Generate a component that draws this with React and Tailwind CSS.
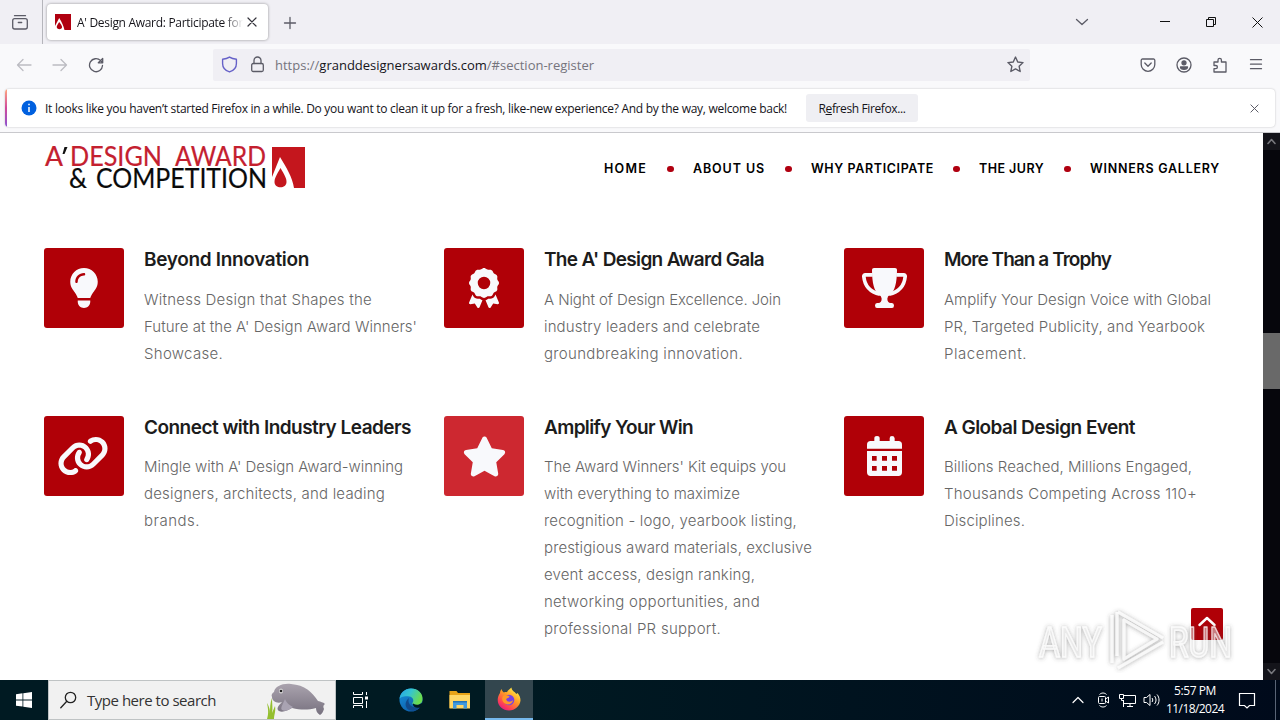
import { useLayoutEffect, useRef, useState } from "react";
import { FaLightbulb, FaAward, FaLink, FaStar } from "react-icons/fa6";

// Spreads one line of text over a fixed width by adjusting its tracking.
function Fit({ w, className = "", children }) {
  const ref = useRef(null);
  const [spacing, setSpacing] = useState(0);
  useLayoutEffect(() => {
    const natural = ref.current.getBoundingClientRect().width;
    const count = ref.current.textContent.length;
    setSpacing((s) => s + (w - natural) / count);
  }, [w]);
  return (
    <span ref={ref} className={`inline-block whitespace-nowrap ${className}`} style={{ letterSpacing: `${spacing}px` }}>
      {children}
    </span>
  );
}

function Trophy() {
  return (
    <svg width="45" height="40" viewBox="0 0 135 120" fill="#f8f9fc">
      <path d="M30 5Q30 0 36 0H99Q105 0 105 5C105 45 98 70 84 80Q76 85 76 92 76 104 86 105H90Q96 106 96 112.500 96 120 90 120H45Q39 120 39 112.500 39 106 45 105H49Q59 104 59 92 59 85 51 80C37 70 30 45 30 5Z" />
      <path d="M32 20.500H10Q5 20.500 5.500 26C8 52 24 72 54 79M103 20.500H125Q130 20.500 129.500 26C127 52 111 72 81 79" fill="none" stroke="#f8f9fc" strokeWidth="11" />
    </svg>
  );
}

function Calendar() {
  return (
    <svg width="35" height="40" viewBox="0 0 105 120" fill="#f8f9fc">
      <path d="M0 38V26Q0 15 11 15H22V7Q22 0 30 0T38 7V15H68V7Q68 0 75 0T83 7V15H94Q105 15 105 26V38Z" />
      <path fillRule="evenodd" d="M0 45H105V109Q105 120 94 120H11Q0 120 0 109ZM15 60V74H29V60ZM45 60V74H60V60ZM75 60V74H90V60ZM15 90V104H29V90ZM45 90V104H60V90ZM75 90V104H90V90Z" />
    </svg>
  );
}

const features = [
  {
    icon: <FaLightbulb size={40} />, title: "Beyond Innovation", w: 165,
    lines: [["Witness Design that Shapes the", 228], ["Future at the A' Design Award Winners'", 273], ["Showcase.", 79]],
  },
  {
    icon: <FaAward size={40} />, title: "The A' Design Award Gala", w: 220,
    lines: [["A Night of Design Excellence. Join", 237], ["industry leaders and celebrate", 216], ["groundbreaking innovation.", 199]],
  },
  {
    icon: <Trophy />, title: "More Than a Trophy", w: 167,
    lines: [["Amplify Your Design Voice with Global", 267], ["PR, Targeted Publicity, and Yearbook", 261], ["Placement.", 83]],
  },
  {
    icon: <FaLink size={52} className="-translate-x-px" />, title: "Connect with Industry Leaders", w: 267, second: true,
    lines: [["Mingle with A' Design Award-winning", 259], ["designers, architects, and leading", 241], ["brands.", 56]],
  },
  {
    icon: <FaStar size={45} />, title: "Amplify Your Win", w: 149, hot: true, second: true,
    lines: [
      ["The Award Winners' Kit equips you", 242], ["with everything to maximize", 196],
      ["recognition - logo, yearbook listing,", 253], ["prestigious award materials, exclusive", 268],
      ["event access, design ranking,", 211], ["networking opportunities, and", 216], ["professional PR support.", 177],
    ],
  },
  {
    icon: <Calendar />, title: "A Global Design Event", w: 191, second: true,
    lines: [["Billions Reached, Millions Engaged,", 248], ["Thousands Competing Across 110+", 253], ["Disciplines.", 81]],
  },
];

function Feature({ f }) {
  return (
    <div className="flex gap-5">
      <div className={`flex size-20 shrink-0 items-center justify-center rounded-[3px] text-[#f8f9fc] ${f.hot ? "bg-[#cd2830]" : "bg-[#b00007]"}`}>
        {f.icon}
      </div>
      <div className="flex flex-col items-start">
        <h3 className={`text-[19px] leading-[23px] font-semibold text-[#1c1c1c] ${f.second ? "h-[37px]" : "h-[38px]"}`}>
          <Fit w={f.w}>{f.title}</Fit>
        </h3>
        {f.lines.map(([t, w]) => (
          <p key={t} className="h-[27px] text-[15px] leading-[27px] font-light text-[#666]">
            <Fit w={w}>{t}</Fit>
          </p>
        ))}
      </div>
    </div>
  );
}

function Favicon() {
  return (
    <svg width="16" height="16" viewBox="0 0 16 16">
      <path d="M0 0h16v16H0z" fill="#b00010" />
      <path d="M4.200 4 0 12v4h9.500C8.500 11.500 6.500 7.500 4.200 4Z" fill="#fff" />
      <path d="M4.200 8c-2 3-2.700 4.200-2.400 5.600.7 2.200 4.500 2.200 5.200 0 .3-1.400-.8-3-2.800-5.600Z" fill="#b00010" />
    </svg>
  );
}

function Stroke({ w = 16, h = 16, vb = "0 0 16 16", d, color = "#5b5b66", sw = 1.3, children }) {
  return (
    <svg width={w} height={h} viewBox={vb} fill="none" stroke={color} strokeWidth={sw} strokeLinecap="round" strokeLinejoin="round">
      {d && <path d={d} />}
      {children}
    </svg>
  );
}

function TabStrip() {
  return (
    <div className="flex h-11 items-center bg-[#f0eff4]">
      <div className="flex h-11 w-[43px] items-center justify-center border-r border-[#b5b5bb] pr-0.5">
        <Stroke w={18} h={18} vb="0 0 18 18">
          <rect x="1.700" y="5.700" width="14.600" height="10.300" rx="2" />
          <path d="M3.500 2.700h11M7.300 9.500h3.400" />
        </Stroke>
      </div>
      <div className="ml-[4px] flex h-[36px] w-[221px] items-center rounded-[4px] bg-white pl-[8px] shadow-[0_0_3px_rgba(0,0,0,0.4)]">
        <Favicon />
        <div className="ml-1.5 w-[166px] overflow-hidden bg-gradient-to-r from-[#15141a] from-88% to-white bg-clip-text pt-0.5 text-xs text-transparent">
          <Fit w={166}>A' Design Award: Participate for</Fit>
        </div>
        <div className="ml-[4px]"><Stroke w={10} h={10} vb="0 0 10 10" d="m1 1 8 8M9 1 1 9" color="#33323a" sw={1.2} /></div>
      </div>
      <div className="ml-[15px] pt-px"><Stroke w={14} h={14} vb="0 0 14 14" d="M7 1.500v11M1.500 7h11" /></div>
      <div className="mr-[66px] ml-auto"><Stroke w={14} h={14} vb="0 0 14 14" d="m1.500 4.500 5.500 5 5.500-5" /></div>
      <svg width="110" height="14" viewBox="0 0 110 14" fill="none" stroke="#111" className="mr-[15px]">
        <path d="M5 6.500h10M51.500 4.500h7v7h-7zM53.500 4.500v-2h7v7h-2M97.500 2.500l10 10m0-10-10 10" />
      </svg>
    </div>
  );
}

function Toolbar() {
  return (
    <div className="flex h-[41px] items-center bg-[#f9f9fb]">
      <div className="ml-4 flex items-center gap-[20px]">
        <Stroke d="M15 8H1.500M7 2.500 1.500 8 7 13.500" color="#bcbcc2" />
        <Stroke d="M1 8h13.500M9 2.500 14.500 8 9 13.500" color="#bcbcc2" />
        <Stroke d="M14.500 8.500A6.500 6.500 0 1 1 12.500 3.500L14 5M14.700 1.500V5.800H10.300Z" />
      </div>
      <div className="ml-[109px] flex h-8 w-[817px] items-center rounded-[2px] bg-[#f0eff4] pl-[8px]">
        <Stroke w={17} h={17} d="M8 1c2 1.300 4 1.800 6.500 2v4c0 4-2.500 6.700-6.500 8-4-1.300-6.500-4-6.500-8V3C4 2.800 6 2.300 8 1Z" color="#6560c8" />
        <div className="ml-3">
          <Stroke w={15} h={17} vb="0 0 15 17">
            <rect x="1.700" y="7.500" width="11.600" height="8" rx="1.500" />
            <path d="M4 7.500v-3a3.500 3.500 0 0 1 7 0v3" />
          </Stroke>
        </div>
        <div className="ml-2.5 pt-0.5 text-[13px] text-[#75747d]">
          <Fit w={319}>https://<span className="text-[#15141a]">granddesignersawards.com</span>/#section-register</Fit>
        </div>
        <div className="mr-[6px] ml-auto">
          <Stroke w={17} h={17} d="m8 1 2.100 4.600 5 .6-3.700 3.400 1 5L8 12.100l-4.400 2.500 1-5L.9 6.200l5-.6Z" />
        </div>
      </div>
      <div className="mr-4 ml-auto flex items-center gap-5">
        <Stroke><path d="M2.500 2h11A1.300 1.300 0 0 1 14.800 3.300V7.500a6.800 6.800 0 0 1-13.600 0V3.300A1.300 1.300 0 0 1 2.500 2ZM4.800 6 8 9.200 11.200 6" /></Stroke>
        <Stroke>
          <circle cx="8" cy="8" r="7" />
          <circle cx="8" cy="5.800" r="2" fill="#5b5b66" />
          <path d="M4.500 10h7c0 3-7 3-7 0Z" fill="#5b5b66" />
        </Stroke>
        <Stroke d="M2 5h4V3a1.700 1.700 0 0 1 3.400 0v2H14v10H2v-3.300h1.800a1.600 1.600 0 0 0 0-3.200H2Z" />
        <Stroke d="M2.500 2.700h11M2.500 7.200h11M2.500 11.700h11" />
      </div>
    </div>
  );
}

function Notice() {
  return (
    <div className="h-[48px] border-b border-[#c9c9cd] bg-[#f9f9fb] px-[5px] pt-1">
      <div className="flex h-[38px] items-center overflow-hidden rounded-[4px] bg-white shadow-[0_0_2px_rgba(0,0,0,0.25)]">
        <div className="h-full w-0.5 bg-gradient-to-b from-[#ffa57a] via-[#d0479a] to-[#8a4fd0]" />
        <svg className="ml-3.5" width="16" height="16" viewBox="0 0 16 16">
          <circle cx="8" cy="8" r="7.500" fill="#0060df" />
          <path d="M8 3.700v1.500M8 7v5" stroke="#fff" strokeWidth="1.500" />
        </svg>
        <div className="ml-2 pt-0.5 text-xs text-[#15141a]">
          <Fit w={742}>It looks like you haven’t started Firefox in a while. Do you want to clean it up for a fresh, like-new experience? And by the way, welcome back!</Fit>
        </div>
        <div className="ml-[19px] flex h-7 w-28 items-center justify-center rounded-[3px] bg-[#efeff3] pt-0.5 text-xs text-[#15141a]">
          <Fit w={87}>R<u>e</u>fresh Firefox...</Fit>
        </div>
        <div className="mr-4 ml-auto"><Stroke w={9} h={9} vb="0 0 10 10" d="m1 1 8 8M9 1 1 9" sw={1.1} /></div>
      </div>
    </div>
  );
}

function Logo() {
  return (
    <svg width="262" height="44" viewBox="0 0 262 44" className="overflow-visible" fontFamily="Lato, sans-serif">
      <g fontSize="26" fill="#c4202f" stroke="#c4202f" strokeWidth=".2">
        <text x="1" y="20.500" textLength="18" lengthAdjust="spacingAndGlyphs">A</text>
        <text x="26" y="20.500" textLength="92" lengthAdjust="spacingAndGlyphs">DESIGN</text>
        <text x="131" y="20.500" textLength="91" lengthAdjust="spacingAndGlyphs">AWARD</text>
      </g>
      <path d="m20.500 2h3l-3 7h-2Z" fill="#111" />
      <g fontSize="26" fill="#0a0a0a" stroke="#0a0a0a" strokeWidth=".2">
        <text x="25" y="42.500" textLength="18" lengthAdjust="spacingAndGlyphs">&amp;</text>
        <text x="52" y="42.500" textLength="171" lengthAdjust="spacingAndGlyphs">COMPETITION</text>
      </g>
      <path d="M228 2h33v41h-33Z" fill="#c4161d" />
      <path d="M236 12 228 32v11h22c-1.500-11-8-21-14-31Z" fill="#fff" />
      <path d="M236.500 23c-4 7-6 10-6 14 0 7 12 7 12 0 0-4-2-7-6-14Z" fill="#c4161d" />
    </svg>
  );
}

function Nav() {
  const dot = <span className="h-1.5 w-[7px] rounded-full bg-[#b00010]" />;
  return (
    <nav className="flex items-center text-[12.500px] font-semibold text-black">
      <Fit w={43}>HOME</Fit><span className="flex w-[46px] justify-center">{dot}</span>
      <Fit w={72}>ABOUT US</Fit><span className="flex w-[46px] justify-center">{dot}</span>
      <Fit w={123}>WHY PARTICIPATE</Fit><span className="flex w-[45px] justify-center">{dot}</span>
      <Fit w={65}>THE JURY</Fit><span className="flex w-[46px] justify-center">{dot}</span>
      <Fit w={130}>WINNERS GALLERY</Fit>
    </nav>
  );
}

function Watermark() {
  return (
    <svg className="absolute top-[474px] left-[1030px]" width="212" height="66" viewBox="0 0 212 66" fontFamily="Roboto, sans-serif" fontSize="43">
      <defs>
        <filter id="soft" x="-20%" y="-20%" width="140%" height="140%">
          <feDropShadow dx="0" dy="0.500" stdDeviation="2" floodColor="#444" floodOpacity=".65" />
        </filter>
      </defs>
      <g filter="url(#soft)" fill="#fff" fillOpacity=".4" stroke="#fff" strokeOpacity=".75" strokeWidth="1.500" strokeLinejoin="round">
        <text x="9" y="50" textLength="63" lengthAdjust="spacingAndGlyphs">ANY</text>
        <text x="139" y="50" textLength="63" lengthAdjust="spacingAndGlyphs">RUN</text>
        <path d="M82 8v48M87 5v44" fill="none" strokeWidth="3" />
        <path d="M94 13v39l33-20ZM88 5l45 26M88 61l45-26" fill="none" strokeWidth="3" />
      </g>
    </svg>
  );
}

function Page() {
  return (
    <div className="relative flex h-[547px] bg-white font-['Inter',sans-serif]">
      <main className="flex w-[1263px] flex-col">
        <header className="flex h-[72px] items-center justify-between pr-[43px] pl-11">
          <div className="-mt-1"><Logo /></div>
          <Nav />
        </header>
        <section className="grid grid-cols-[400px_400px_400px] gap-y-[49px] pt-[43px] pl-11">
          {features.map((f) => <Feature key={f.title} f={f} />)}
        </section>
      </main>
      <aside className="flex w-[17px] flex-col items-center bg-[#06060c]">
        <div className="flex h-[17px] w-full items-center justify-center bg-[#14141a]">
          <Stroke w={9} h={7} vb="0 0 9 7" d="m1 5.500 3.500-4 3.500 4" color="#77777c" sw={1.6} />
        </div>
        <div className="mt-[183px] h-14 w-full bg-[#696969]" />
        <div className="mt-auto flex h-[17px] w-full items-center justify-center bg-[#14141a]">
          <Stroke w={9} h={7} vb="0 0 9 7" d="m1 1.500 3.500 4 3.500-4" color="#77777c" sw={1.6} />
        </div>
      </aside>
      <div className="absolute top-[475px] left-[1191px] flex size-8 items-center justify-center rounded-[2px] bg-[#b00007] pb-1">
        <Stroke w={18} h={12} vb="0 0 18 12" d="m1.500 9 7.500-7 7.500 7" color="#fff" sw={2.4} />
      </div>
      <Watermark />
    </div>
  );
}

function Manatee() {
  return (
    <svg width="66" height="38" viewBox="0 0 66 38">
      <defs>
        <linearGradient id="skin" x1="0" y1="0" x2="0" y2="1">
          <stop offset="0" stopColor="#aaa3ae" />
          <stop offset="1" stopColor="#77717f" />
        </linearGradient>
      </defs>
      <path d="M7 11C8 5 16 2 24 3c14 1 21 8 27 17 3 1 5 1 7 3-2 1-2 3-1 5-1 3-2 5-4 6-3-2-4-4-4-7-8 2-15 2-24 0-4 2-9 5-13 3-3-2-1-5 3-9-5 2-10-1-10-5-1-2 0-4 2-5Z" fill="url(#skin)" />
      <path d="M18 18c2 5 6 7 8 8-4 3-8 5-11 3-2-2 1-6 3-11Z" fill="#a9a3b2" />
      <ellipse cx="14" cy="10" rx="2" ry="2.500" fill="#ddd" /><circle cx="14" cy="10" r="1.300" fill="#222" />
      <path d="M0 38c2-6 1-11 0-16 3 5 3 8 3 11 0-6 0-11 2-16 0 6 1 10 0 15l3-7c1 5-1 9-1 13Z" fill="#94bf2f" />
    </svg>
  );
}

function Edge() {
  return (
    <svg width="24" height="24" viewBox="0 0 24 24">
      <defs>
        <linearGradient id="wave" x1="0" y1="0" x2="1" y2=".4">
          <stop offset="0" stopColor="#25a5e8" /><stop offset=".5" stopColor="#36c5cf" /><stop offset="1" stopColor="#6bdc4e" />
        </linearGradient>
        <linearGradient id="deep" x1="0" y1="0" x2=".7" y2="1">
          <stop offset="0" stopColor="#1795e0" /><stop offset="1" stopColor="#0c59a4" />
        </linearGradient>
      </defs>
      <circle cx="12" cy="12" r="11.500" fill="url(#deep)" />
      <path d="M.5 11C1 5 6 .5 12 .5c7 0 12 5 11.500 10.500 0 4-3 6-6 6-3 0-4.500-1-4.200-2 2-2 1-6-3-6.500C6 7.500 1 9 .5 11Z" fill="url(#wave)" />
      <path d="M10 10c-2 5 2 10 8 9.500 2 0 3-.5 4-1.500-2 4-8 6-12 4-5-3-4-9 0-12Z" fill="#114a8b" />
      <path d="M14 15.500c3 2 6.500 1.500 8.500-.5l1.500 2-2.500 2.500c-4 .8-8-.5-7.500-4Z" fill="#001a22" />
    </svg>
  );
}

function Folder() {
  return (
    <svg width="22" height="20" viewBox="0 0 22 20">
      <path d="M.5 1h7l1.500 2h12v15H.5Z" fill="#e8a317" />
      <path d="M.5 5h20.500v13.500H.5Z" fill="#ffd766" />
      <path d="M4 18.500V11h14v7.500h-3.500V15h-7v3.500Z" fill="#3f9ae0" />
      <path d="M4 11h14v1.500H4Z" fill="#2474b8" />
    </svg>
  );
}

function Firefox() {
  return (
    <svg width="24" height="24" viewBox="0 0 24 24">
      <defs>
        <linearGradient id="fire" x1=".85" y1=".1" x2=".2" y2="1">
          <stop offset="0" stopColor="#fff04a" /><stop offset=".4" stopColor="#ff9a26" /><stop offset=".75" stopColor="#ff4352" /><stop offset="1" stopColor="#e31587" />
        </linearGradient>
      </defs>
      <path d="M3 6c0-2 1-3 1.500-4C5 4 6 5 7 5.500c1-.5 2-.5 3-.3C11 3 13 2 14.500.5c0 3 3 4 5 6.500l1-1c2 2 3 5 3 7.500C23 19 18 23.500 12 23.500S.7 19 .7 13c0-3 1-5 2.300-7Z" fill="url(#fire)" />
      <circle cx="12" cy="13" r="5.300" fill="#7542e5" />
      <path d="M6 9c3-2 4 0 6.500.2 0 2-3 1.500-3.300 3.300 1 3 5 2.500 7 .5-1 5-7 6-10 2C4.800 13 5 11 6 9Z" fill="#ff9828" />
    </svg>
  );
}

function Taskbar() {
  return (
    <footer className="flex h-10 items-center bg-gradient-to-r from-[#001a22] from-40% to-[#000a1b] text-white">
      <div className="flex w-12 justify-center">
        <svg width="16" height="16" viewBox="0 0 16 16" fill="#fff"><path d="M0 2.200 6.500 1.300v6.200H0ZM7.300 1.200 16 0v7.500H7.300ZM0 8.400h6.500v6.200L0 13.700ZM7.300 8.400H16V16l-8.700-1.200Z" /></svg>
      </div>
      <div className="flex h-10 w-[288px] items-center border border-[#bfc3c4] bg-[#f1f1f1] pl-[11px]">
        <Stroke w={17} h={18} vb="0 0 17 18" color="#222"><circle cx="10.500" cy="6.500" r="5.200" /><path d="m6.800 10.300-6 6.500" /></Stroke>
        <div className="ml-2.5 pt-px text-[15px] text-[#333]"><Fit w={129}>Type here to search</Fit></div>
        <div className="ml-auto"><Manatee /></div>
        <div className="w-0.5" />
      </div>
      <div className="flex w-12 justify-center">
        <svg width="17" height="16" viewBox="0 0 17 16" fill="none" stroke="#fff"><path d="M1.500 0v2.500h9V0M1.500 5.500h9v6h-9zM1.500 16v-2.500h9V16M14.500 0v3M14.500 9v7" /><path d="M13 4.500h3v3h-3z" fill="#fff" stroke="none" /></svg>
      </div>
      <div className="flex w-[54px] justify-center"><Edge /></div>
      <div className="flex w-[47px] justify-center pr-1"><Folder /></div>
      <div className="flex h-10 w-12 items-center justify-center border-b-2 border-[#76b9ed] bg-[#33464e]"><Firefox /></div>
      <div className="mr-[4px] ml-auto flex h-10 items-center">
        <Stroke w={12} h={8} vb="0 0 12 8" d="m1 6.500 5-5 5 5" color="#fff" sw={1.2} />
        <svg className="ml-[13px]" width="13" height="16" viewBox="0 0 13 16" fill="none" stroke="#fff"><rect x="1.500" y="4.500" width="7" height="7" rx="1" /><path d="m8.500 7 3-2v6l-3-2M2.500 2.500c2-2 5-2 7 0M2.500 13.500c2 2 5 2 7 0M5 6.500v3" /></svg>
        <svg className="ml-[9px]" width="17" height="15" viewBox="0 0 17 15" fill="none" stroke="#fff"><path d="M5 2.500h11.500v8H5M4.500 7v7M8 13.500h6M11 10.500v3M.5 1.500h4v4h-4zM2.500 5.500v2h2" /></svg>
        <svg className="ml-[7px]" width="18" height="16" viewBox="0 0 18 16" fill="none" stroke="#fff"><path d="M1 5.500h2.500l3.500-3v11l-3.500-3H1ZM9 6c1 1.300 1 2.700 0 4M11.500 4c2 2.500 2 5.500 0 8M14 2.500c2.700 3 2.700 8 0 11" /></svg>
        <div className="ml-[5px] flex w-[58px] flex-col items-center text-xs leading-[18px]">
          <Fit w={42}>5:57 PM</Fit>
          <Fit w={58}>11/18/2024</Fit>
        </div>
        <svg className="ml-3.5" width="18" height="17" viewBox="0 0 18 17" fill="none" stroke="#fff" strokeWidth="1.200"><path d="M1.500 1.500h15v12h-5l-2.500 2.500-2.500-2.500h-5Z" /></svg>
        <div className="ml-[19px] h-10 w-px bg-[#596476]" />
      </div>
    </footer>
  );
}

export default function App() {
  return (
    <div className="flex h-[720px] w-[1280px] flex-col overflow-hidden bg-white font-['Open_Sans','Noto_Sans',sans-serif]">
      <TabStrip />
      <Toolbar />
      <Notice />
      <Page />
      <Taskbar />
    </div>
  );
}
